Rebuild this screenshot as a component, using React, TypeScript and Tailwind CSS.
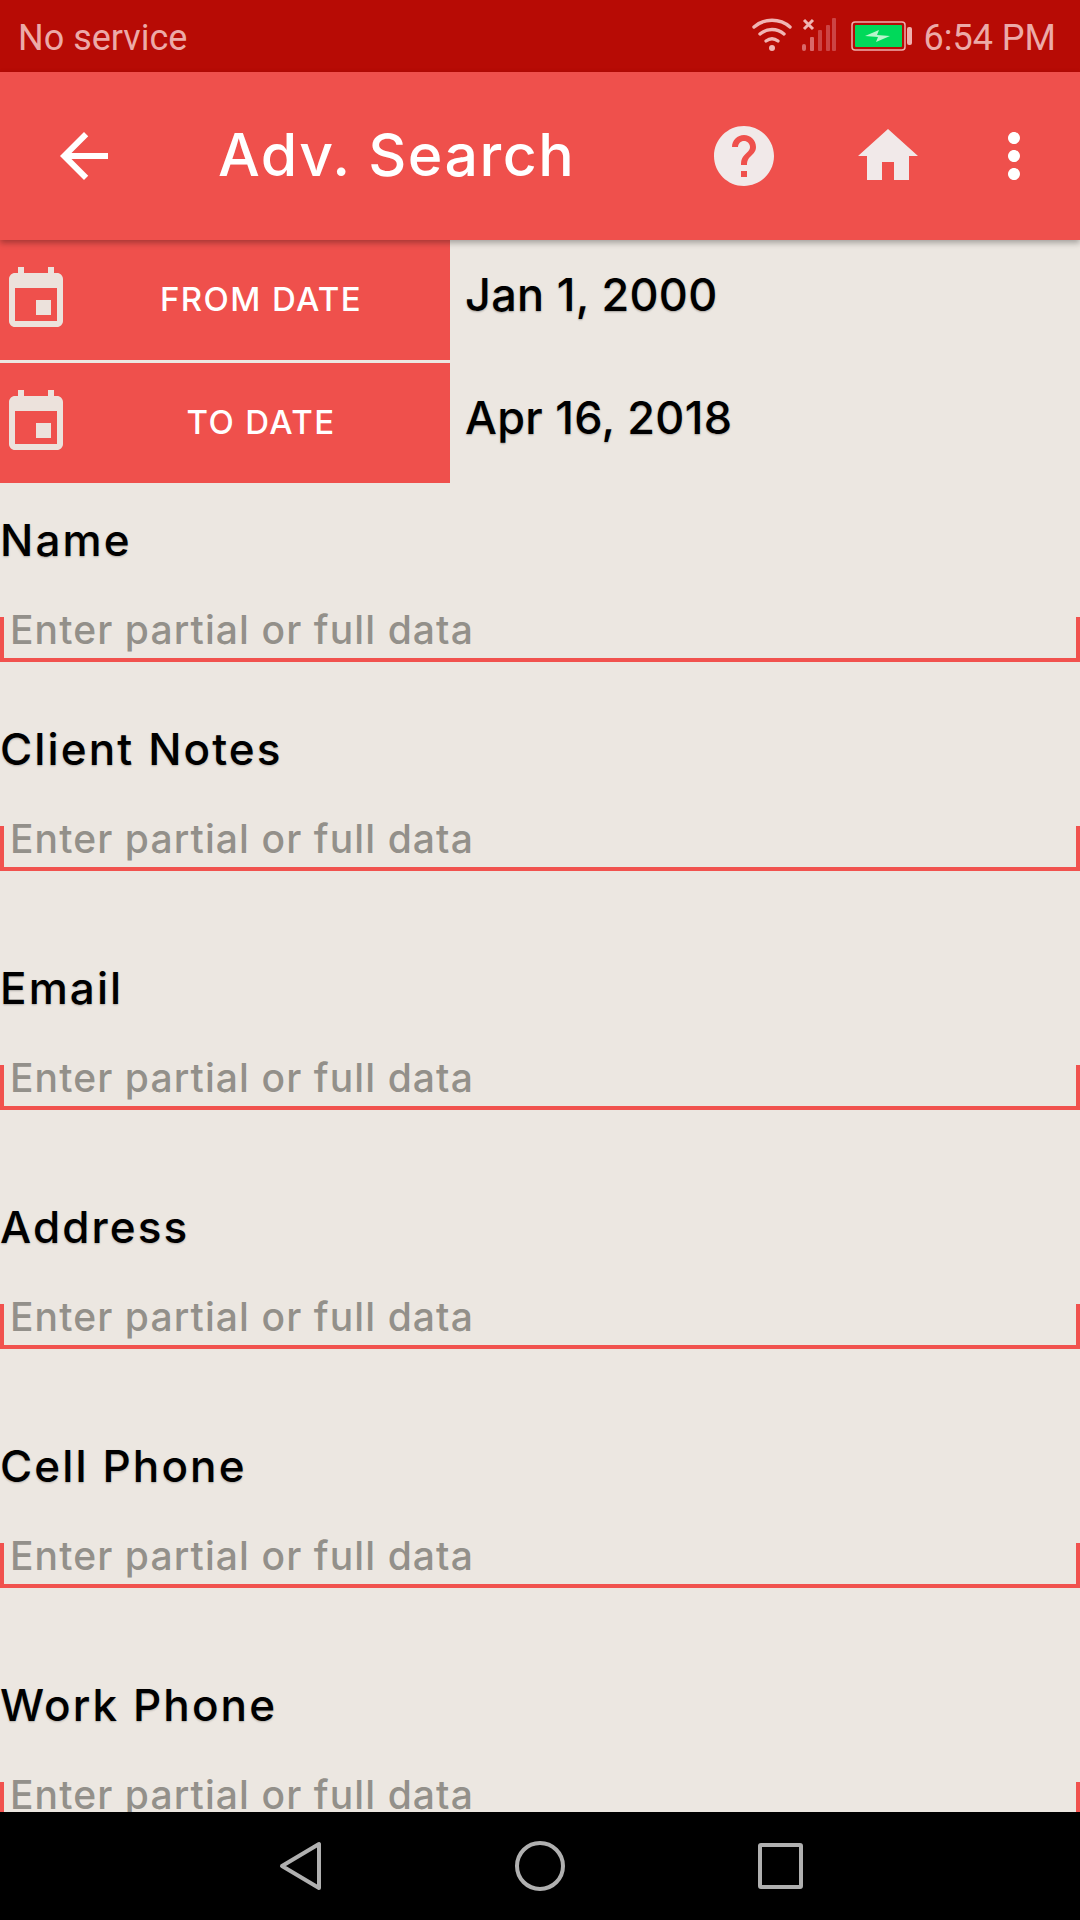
const sans = "font-['Inter',sans-serif]"

const EventIcon = () => (
  <svg viewBox="0 0 24 24" className="w-[72px] h-[72px] shrink-0" fill="#ece2dc">
    <path d="M17 12h-5v5h5v-5zM16 1v2H8V1H6v2H5c-1.11 0-1.99.9-1.99 2L3 19c0 1.1.89 2 2 2h14c1.1 0 2-.9 2-2V5c0-1.1-.9-2-2-2h-1V1h-2zm3 18H5V8h14v11z" />
  </svg>
)

const StatusBar = () => (
  <div className="h-[72px] shrink-0 bg-[#b70b05] flex items-center justify-between pl-[18px] pr-[24px] text-[#ecaaa8] text-[36px] font-['Roboto',sans-serif]">
    <span className="mt-[4px]">No service</span>
    <div className="flex items-center">
      <svg viewBox="0 0 40 34" className="w-[40px] h-[34px] mb-[3px]" fill="none" stroke="#f0b5b3" strokeWidth="3.4" strokeLinecap="round">
        <path d="M2 9C12 0 28 0 38 9" />
        <path d="M8 16c7-6 17-6 24 0" />
        <path d="M14 23c4-3 8-3 12 0" />
        <circle cx="20" cy="30" r="3" fill="#f0b5b3" stroke="none" />
      </svg>
      <svg viewBox="0 0 36 36" className="ml-[9px] w-[36px] h-[36px] mb-[2px]">
        <path d="M3 3l9 9M12 3l-9 9" stroke="#f0b5b3" strokeWidth="3" />
        <rect x="1" y="27" width="4" height="7" rx="2" fill="#d9696a" />
        <rect x="9" y="20" width="4" height="14" rx="1" fill="#d9696a" />
        <rect x="17" y="13" width="4" height="21" rx="1" fill="#cc4444" />
        <rect x="25" y="8" width="4" height="26" rx="1" fill="#cc4444" />
        <rect x="31" y="1" width="4" height="33" rx="1" fill="#cc4444" />
      </svg>
      <svg viewBox="0 0 62 30" className="ml-[14px] w-[62px] h-[30px]">
        <rect x="1" y="1" width="53" height="28" rx="3" fill="none" stroke="#efb0ae" strokeWidth="1.5" />
        <rect x="4" y="4" width="47" height="22" rx="1" fill="#00d95a" />
        <path d="M14 15l14-6-2 5 13 1-14 6 2-5z" fill="#b8f5cc" />
        <rect x="56" y="6" width="5" height="18" rx="2" fill="#efb0ae" />
      </svg>
      <span className="ml-[11px] mt-[4px]">6:54 PM</span>
    </div>
  </div>
)

const Toolbar = () => (
  <div className={`h-[168px] shrink-0 bg-[#ef504c] flex items-center relative z-10 shadow-[0_3px_6px_rgba(0,0,0,0.3)] pl-[48px] pr-[30px] ${sans}`}>
    <svg viewBox="0 0 24 24" className="w-[72px] h-[72px] shrink-0" fill="#fff">
      <path d="M20 11H7.83l5.59-5.59L12 4l-8 8 8 8 1.41-1.41L7.83 13H20v-2z" />
    </svg>
    <span className="ml-[98px] mb-[3px] flex-1 text-white text-[59px] font-medium leading-none tracking-[1.5px]">Adv. Search</span>
    <svg viewBox="0 0 24 24" className="w-[72px] h-[72px] shrink-0" fill="#f1e9e9">
      <path d="M12 2C6.48 2 2 6.48 2 12s4.48 10 10 10 10-4.48 10-10S17.52 2 12 2zm1 17h-2v-2h2v2zm2.07-7.75l-.9.92C13.45 12.9 13 13.5 13 15h-2v-.5c0-1.1.45-2.1 1.17-2.83l1.24-1.26c.37-.36.59-.86.59-1.41 0-1.1-.9-2-2-2s-2 .9-2 2H8c0-2.21 1.79-4 4-4s4 1.79 4 4c0 .88-.36 1.68-.93 2.25z" />
    </svg>
    <svg viewBox="0 0 24 24" className="ml-[72px] w-[72px] h-[72px] shrink-0" fill="#f1e9e9">
      <path d="M10 20v-6h4v6h5v-8h3L12 3 2 12h3v8z" />
    </svg>
    <svg viewBox="0 0 24 24" className="ml-[54px] w-[72px] h-[72px] shrink-0" fill="#fff">
      <path d="M12 8c1.1 0 2-.9 2-2s-.9-2-2-2-2 .9-2 2 .9 2 2 2zm0 2c-1.1 0-2 .9-2 2s.9 2 2 2 2-.9 2-2-.9-2-2-2zm0 6c-1.1 0-2 .9-2 2s.9 2 2 2 2-.9 2-2-.9-2-2-2z" />
    </svg>
  </div>
)

const DateRow = ({ label, value, className }: { label: string; value: string; className?: string }) => (
  <div className={`flex h-[120px] ${className || ''}`}>
    <div className="w-[450px] bg-[#ef504c] flex items-center">
      <EventIcon />
      <span className="flex-1 text-center text-white text-[33px] font-medium tracking-[1.4px]">{label}</span>
    </div>
    <span className="ml-[15px] mb-[10px] self-center text-black text-[45px] font-medium tracking-[0.3px] [text-shadow:0_1px_2px_rgba(0,0,0,0.3)]">{value}</span>
  </div>
)

const Field = ({ label, className }: { label: string; className?: string }) => (
  <div className={className}>
    <div className="h-[50px] leading-[50px] text-black text-[44px] font-medium tracking-[2.1px] [text-shadow:0_1px_2px_rgba(0,0,0,0.25)]">{label}</div>
    <div className="flow-root mt-[52px] h-[45px] border-x-4 border-b-4 border-[#f1524e]">
      <input
        readOnly
        placeholder="Enter partial or full data"
        className="block w-full h-[52px] -mt-[13px] pl-[6px] bg-transparent text-[39px] font-medium tracking-[1.1px] outline-none placeholder:text-[#93908a]"
      />
    </div>
  </div>
)

const NavBar = () => (
  <div className="h-[108px] shrink-0 bg-black flex items-center pl-[279px]">
    <svg viewBox="0 0 44 50" className="w-[44px] h-[50px] shrink-0" fill="none" stroke="#b0b0b0" strokeWidth="4" strokeLinejoin="round">
      <path d="M40 3v44L3 25z" />
    </svg>
    <div className="ml-[192px] w-[50px] h-[50px] rounded-full border-4 border-[#b0b0b0] shrink-0" />
    <div className="ml-[193px] w-[45px] h-[46px] rounded-[3px] border-4 border-[#b0b0b0] shrink-0" />
  </div>
)

export default function App() {
  return (
    <div className="w-[1080px] h-[1920px] flex flex-col bg-[#ece7e1] overflow-hidden">
      <StatusBar />
      <Toolbar />
      <div className={`flex-1 overflow-hidden ${sans}`}>
        <DateRow label="FROM DATE" value="Jan 1, 2000" />
        <DateRow label="TO DATE" value="Apr 16, 2018" className="mt-[3px]" />
        <Field label="Name" className="mt-[32px]" />
        <Field label="Client Notes" className="mt-[62px]" />
        <Field label="Email" className="mt-[92px]" />
        <Field label="Address" className="mt-[92px]" />
        <Field label="Cell Phone" className="mt-[92px]" />
        <Field label="Work Phone" className="mt-[92px]" />
      </div>
      <NavBar />
    </div>
  )
}
